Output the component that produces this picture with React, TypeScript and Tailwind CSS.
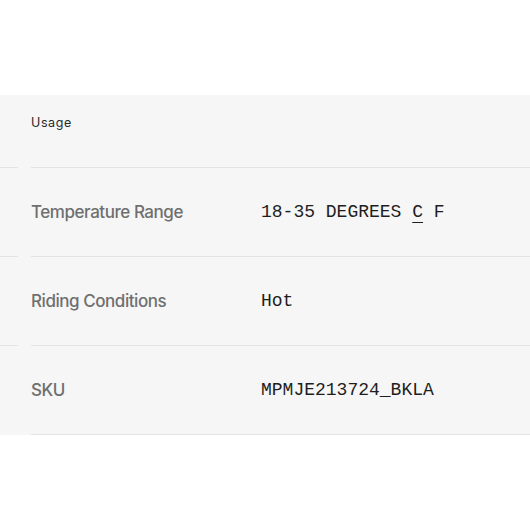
import React from 'react';

const ROWS = [
    { label: 'Temperature Range', value: 'temp' },
    { label: 'Riding Conditions', value: 'Hot' },
    { label: 'SKU', value: 'MPMJE213724_BKLA' },
];

function Row({ children, last }: { children: React.ReactNode; last?: boolean }) {
    return (
        <div className="flex">
            <div className="w-[31px] flex-shrink-0 flex items-end">
                {!last && <div className="w-[18px] border-b border-[#e4e4e4]" />}
            </div>
            <div className="flex-1 border-b border-[#e4e4e4]">{children}</div>
        </div>
    );
}

export default function App() {
    return (
        <div className="w-[530px] h-[530px] bg-white pt-[95px]">
            <div className="bg-[#f6f6f6]">
                <Row>
                    <div className="h-[72px] pt-[19px] leading-[18px] text-[12.5px] tracking-[0.6px] text-[#2a2a2a] font-['Inter',sans-serif]">
                        Usage
                    </div>
                </Row>
                {ROWS.map((r, i) => (
                    <Row key={r.label} last={i === ROWS.length - 1}>
                        <div className="h-[88px] flex items-center">
                            <div className="w-[230px] pt-[2px] text-[17px] font-medium tracking-[-0.45px] text-[#6f6f6f] font-['Inter',sans-serif]">
                                {r.label}
                            </div>
                            <div className="text-[18px] text-[#1e1e1e] font-['Liberation_Mono',monospace]">
                                {r.value === 'temp' ? (
                                    <span>
                                        18-35 DEGREES <span className="underline underline-offset-[5px]">C</span> F
                                    </span>
                                ) : (
                                    r.value
                                )}
                            </div>
                        </div>
                    </Row>
                ))}
            </div>
        </div>
    );
}
